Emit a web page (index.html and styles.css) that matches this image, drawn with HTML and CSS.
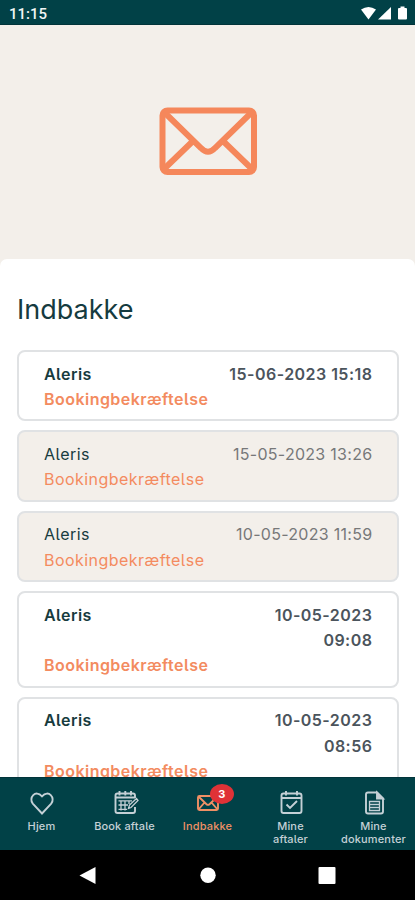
FILE: index.html
```html
<!DOCTYPE html>
<html lang="da">
<head>
<meta charset="utf-8">
<meta name="viewport" content="width=device-width, initial-scale=1">
<title>Indbakke</title>
<link rel="stylesheet" href="styles.css">
</head>
<body>
<div class="phone">
  <header class="status">
    <span class="clock">11:15</span>
    <svg class="status-icons" width="50" height="16" viewBox="0 0 50 16" fill="#fff"><path d="M1 3.600Q8.500-1.500 16 3.600L8.500 13.500Z"/><path d="M18 13.500L31 1V13.500Z"/><path d="M38 3Q38 2 39 2H40.500V.500H44.500V2H46Q47 2 47 3V12.500Q47 13.500 46 13.500H39Q38 13.500 38 12.500Z"/></svg>
  </header>
  <section class="hero">
    <svg class="hero-icon" width="98" height="68" viewBox="0 0 98 68" fill="none" stroke="#f5875b" stroke-width="6"><rect x="3.500" y="3.500" width="91.500" height="61.500" rx="5"/><path d="M5 5L42 41Q49 48.500 56 41L93 5M4 63L34 34M94 63L64 34"/></svg>
  </section>
  <main class="sheet">
    <h1>Indbakke</h1>
    <div class="list">
      <article class="card"><div class="row"><span class="from">Aleris</span><time>15-06-2023 15:18</time></div><p>Bookingbekræftelse</p></article>
      <article class="card read"><div class="row"><span class="from">Aleris</span><time>15-05-2023 13:26</time></div><p>Bookingbekræftelse</p></article>
      <article class="card read"><div class="row"><span class="from">Aleris</span><time>10-05-2023 11:59</time></div><p>Bookingbekræftelse</p></article>
      <article class="card"><div class="row"><span class="from">Aleris</span><time>10-05-2023<br>09:08</time></div><p>Bookingbekræftelse</p></article>
      <article class="card"><div class="row"><span class="from">Aleris</span><time>10-05-2023<br>08:56</time></div><p>Bookingbekræftelse</p></article>
    </div>
  </main>
  <nav class="tabs">
    <a class="tab"><svg width="26" height="26" viewBox="0 0 26 26"><path d="M13 23.500L3.800 13.600C-.8 8 6.500-1 13 6.300C19.500-1 26.800 8 22.200 13.600Z"/></svg><span>Hjem</span></a>
    <a class="tab"><svg width="26" height="26" viewBox="0 0 26 26"><path d="M23 17V21Q23 23 21 23H5.500Q3.500 23 3.500 21V5.500Q3.500 3.500 5.500 3.500H21Q23 3.500 23 5.500V8M3.500 7.500H23M7.500 1V5.500M13.300 1V5.500M19 1V5.500"/><path class="fine" d="M6.500 10.800H20M6.500 15H16M6.500 19.300H15M9 10.500V20.500M13 10.500V20.500M17 10.500V14M16.500 18.500L17.500 15L24.500 8.500L26 10.500L19 17.500Z"/></svg><span>Book aftale</span></a>
    <a class="tab active"><svg width="26" height="26" viewBox="0 0 26 26"><rect x="3" y="6" width="20" height="14" rx="1.500"/><path d="M3.500 6.500L11.500 14.200Q13 15.500 14.500 14.200L22.500 6.500M3.500 19.500L9.500 12.500M22.500 19.500L16.500 12.500"/></svg><b class="badge">3</b><span>Indbakke</span></a>
    <a class="tab"><svg width="26" height="26" viewBox="0 0 26 26"><rect x="3.500" y="3.500" width="20" height="19.500" rx="2"/><path d="M3.500 8H23.500M8 1V5.500M19 1V5.500M8.500 14.500L12 18L19 11"/></svg><span>Mine<br>aftaler</span></a>
    <a class="tab"><svg width="26" height="26" viewBox="0 0 26 26"><path d="M7 2.500H16L22 8.500V21.500Q22 23.500 20 23.500H7Q5 23.500 5 21.500V4.500Q5 2.500 7 2.500Z"/><path d="M16 2.500V8.500H22Z" fill="currentColor"/><path class="fine" d="M8.500 11.500H18.500V20.500H8.500ZM8.500 14.500H18.500M8.500 17.500H18.500"/></svg><span>Mine<br>dokumenter</span></a>
  </nav>
  <footer class="system">
    <svg width="18" height="20" viewBox="0 0 18 20"><path d="M.500 10.500L16.500 2V19Z"/></svg>
    <svg width="18" height="20" viewBox="0 0 18 20"><circle cx="9" cy="10.300" r="7.700"/></svg>
    <svg width="18" height="20" viewBox="0 0 18 20"><rect x=".500" y="2" width="17" height="17" rx="1"/></svg>
  </footer>
</div>
</body>
</html>
```
FILE: styles.css
```css
* { box-sizing: border-box; }
body { margin: 0; font-family: Inter, "Liberation Sans", sans-serif; font-feature-settings: "cv05" 1; background: #fff; }
.phone { height: 900px; width: 415px; display: flex; flex-direction: column; overflow: hidden; }
.status { flex: 0 0 25px; background: #014147; border-bottom: 1px solid #01343a; color: #f0f5f5; display: flex; justify-content: space-between; align-items: center; padding: 3px 5px 0 9px; }
.clock { font: 500 15px/20px Roboto, sans-serif; }
.hero { flex: 0 0 241px; background: #f3efea; padding: 82px 0 0 159px; }
.hero-icon { display: block; }
.sheet { flex: 1 1 0; min-height: 0; overflow: hidden; margin-top: -7px; background: #fff; border-radius: 7px 7px 0 0; padding: 33px 16px 0 17px; }
h1 { margin: 0; font-size: 27px; line-height: 36px; font-weight: 400; color: #153b40; height: 58px; }
.list { display: flex; flex-direction: column; gap: 9px; }
.card { flex: none; border: 2px solid #e0e2e4; border-radius: 8px; padding: 9.500px 25px 7.200px; font-size: 16px; line-height: 25.350px; font-weight: 600; letter-spacing: .46px; background: #fff; }
.read { background: #f3efea; font-weight: 400; }
.row { display: flex; justify-content: space-between; }
.from { color: #173b3e; }
time { text-align: right; color: #4b545c; white-space: nowrap; margin-right: -.4px; }
.read time { color: #777879; letter-spacing: .28px; }
.card p { margin: 0; color: #f38b60; }
.tabs { flex: 0 0 73px; background: #014147; display: grid; grid-template-columns: repeat(5, 83px); border-top: 1px solid #01343a; padding-top: 12px; color: #c4d0d6; }
.tab { display: flex; flex-direction: column; align-items: center; position: relative; text-align: center; font-size: 11px; line-height: 12.500px; font-weight: 500; letter-spacing: .15px; }
.tab svg { flex: none; fill: none; stroke: currentColor; stroke-width: 1.900; margin-bottom: 4px; overflow: visible; }
.tab svg .fine { stroke-width: 1.300; }
.active { color: #ef9065; }
.badge { position: absolute; left: 44px; top: -6px; width: 24px; height: 20px; border-radius: 50%; background: #df3237; color: #fff; font-size: 11px; line-height: 20px; font-weight: 700; }
.system { flex: 0 0 50px; background: #000; display: flex; justify-content: space-between; align-items: center; padding: 0 79px; }
.system svg { fill: #fff; }
```
